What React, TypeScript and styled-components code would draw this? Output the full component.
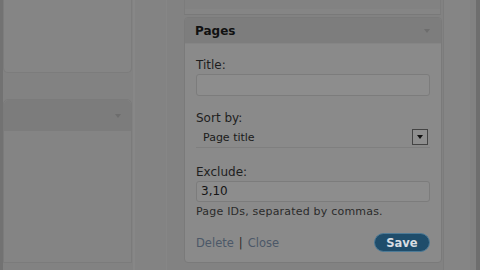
import React from 'react';
import styled, { createGlobalStyle } from 'styled-components';

const Global = createGlobalStyle`
  html, body {
    margin: 0;
    padding: 0;
    background: #818181;
    font-family: "DejaVu Sans", Verdana, sans-serif;
    overflow: hidden;
  }
`;

const Page = styled.div`
  width: 480px;
  height: 270px;
  display: flex;
  background: #828282;
  border-left: 3px solid #727272;
  box-sizing: border-box;
  overflow: hidden;
`;

const LeftCol = styled.div`
  width: 129px;
  display: flex;
  flex-direction: column;
  gap: 26px;
  flex-shrink: 0;
`;

const TopBox = styled.div`
  height: 73px;
  background: #858585;
  border: 1px solid #7c7c7c;
  border-top: none;
  border-radius: 0 0 5px 5px;
  box-sizing: border-box;
`;

const SideBox = styled.div`
  height: 164px;
  background: #848484;
  border: 1px solid #7b7b7b;
  border-radius: 5px 5px 0 0;
  box-sizing: border-box;
  display: flex;
  flex-direction: column;
`;

const SideHead = styled.div`
  height: 31px;
  background: #7c7c7c;
  display: flex;
  align-items: center;
  justify-content: flex-end;
  padding-right: 10px;
  border-radius: 5px 5px 0 0;
`;

const TinyArrow = styled.span`
  width: 0;
  height: 0;
  border-left: 3px solid transparent;
  border-right: 3px solid transparent;
  border-top: 4px solid #6d6d6d;
`;

const Gutter = styled.div`
  width: 34px;
  flex-shrink: 0;
  border-left: 2px solid #878787;
  border-right: 1px solid #868686;
  margin-left: 1px;
  box-sizing: border-box;
  background: #838383;
`;

const RightCol = styled.div`
  width: 274px;
  flex-shrink: 0;
  display: flex;
  flex-direction: column;
  padding-left: 17px;
  box-sizing: border-box;
`;

const RightStrip = styled.div`
  flex: 1;
  margin-left: 2px;
  background: #858585;
  border-left: 1px solid #7c7c7c;
  border-right: 4px solid #6e6e6e;
  box-shadow: inset -6px 0 0 #828282;
`;

const PrevWidget = styled.div`
  height: 14px;
  border-bottom: 1px solid #797979;
  border-left: 1px solid #7c7c7c;
  border-right: 1px solid #7c7c7c;
  box-shadow: inset 0 -5px 0 #858585;
`;

const Widget = styled.div`
  margin-top: 2px;
  width: 256px;
  height: 244px;
  border: 1px solid #7a7a7a;
  border-radius: 4px;
  background: #8a8a8a;
  display: flex;
  flex-direction: column;
  overflow: hidden;
`;

const WidgetHead = styled.div`
  height: 25px;
  background: #7d7d7d;
  display: flex;
  align-items: center;
  justify-content: space-between;
  padding: 0 11px 0 10px;
  border-bottom: 1px solid #858585;
`;

const Title = styled.span`
  font-size: 12px;
  font-weight: bold;
  color: #111;
`;

const Body = styled.div`
  padding: 14px 11px 0 11px;
  display: flex;
  flex-direction: column;
`;

const Label = styled.div`
  font-size: 12px;
  color: #1e1e1e;
  line-height: 14px;
  margin-bottom: 2px;
`;

const Input = styled.div<{ $mb: number; $h: number }>`
  height: ${p => p.$h}px;
  border: 1px solid #7c7c7c;
  border-radius: 3px;
  background: #8d8d8d;
  box-sizing: border-box;
  font-size: 12px;
  color: #151515;
  padding-left: 4px;
  line-height: ${p => p.$h - 2}px;
  margin-bottom: ${p => p.$mb}px;
`;

const Select = styled.div`
  height: 20px;
  display: flex;
  align-items: center;
  justify-content: space-between;
  border-bottom: 1px solid #7f7f7f;
  margin-bottom: 17px;
  padding-left: 7px;
  font-size: 11px;
  color: #1a1a1a;
`;

const DropBtn = styled.span`
  width: 16px;
  height: 16px;
  border: 1px solid #444;
  box-sizing: border-box;
  display: flex;
  align-items: center;
  justify-content: center;
  margin-right: 2px;
  background: #8e8e8e;
  &::after {
    content: '';
    border-left: 3px solid transparent;
    border-right: 3px solid transparent;
    border-top: 4px solid #111;
  }
`;

const Help = styled.div`
  font-size: 11px;
  line-height: 13px;
  letter-spacing: 0.2px;
  color: #2a2a2a;
  margin-top: 3px;
`;

const Footer = styled.div`
  margin-top: 15px;
  display: flex;
  align-items: center;
  justify-content: space-between;
`;

const Links = styled.div`
  font-size: 11.5px;
  color: #4c5868;
  display: flex;
  gap: 5px;
`;

const Sep = styled.span`
  color: #2a2a2a;
`;

const SaveBtn = styled.div`
  width: 56px;
  height: 19px;
  border-radius: 10px;
  background: #1f4d6b;
  border: 1px solid #4d7a96;
  box-sizing: border-box;
  color: #d8dde2;
  font-size: 11.5px;
  font-weight: bold;
  display: flex;
  align-items: center;
  justify-content: center;
`;

export default function App() {
  return (
    <Page>
      <Global />
      <LeftCol>
        <TopBox />
        <SideBox>
          <SideHead>
            <TinyArrow />
          </SideHead>
        </SideBox>
      </LeftCol>
      <Gutter />
      <RightCol>
        <PrevWidget />
        <Widget>
          <WidgetHead>
            <Title>Pages</Title>
            <TinyArrow />
          </WidgetHead>
          <Body>
            <Label>Title:</Label>
            <Input $mb={15} $h={22} />
            <Label>Sort by:</Label>
            <Select>
              <span>Page title</span>
              <DropBtn />
            </Select>
            <Label>Exclude:</Label>
            <Input $mb={0} $h={21}>3,10</Input>
            <Help>Page IDs, separated by commas.</Help>
            <Footer>
              <Links>
                <span>Delete</span>
                <Sep>|</Sep>
                <span>Close</span>
              </Links>
              <SaveBtn>Save</SaveBtn>
            </Footer>
          </Body>
        </Widget>
      </RightCol>
      <RightStrip />
    </Page>
  );
}
